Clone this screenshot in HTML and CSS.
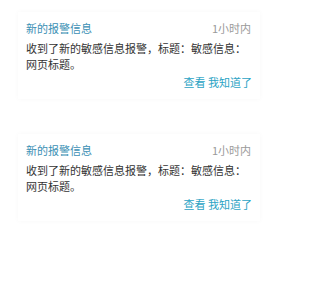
FILE: index.html
```html
<!DOCTYPE html>
<html lang="zh-CN">
<head>
<meta charset="utf-8">
<link rel="stylesheet" href="styles.css">
</head>
<body>
<div class="list">
  <div class="card">
    <div class="head">
      <span class="title">新的报警信息</span>
      <span class="time">1小时内</span>
    </div>
    <div class="text">收到了新的敏感信息报警，标题：敏感信息：网页标题。</div>
    <div class="actions"><a class="link">查看</a> <a class="link">我知道了</a></div>
  </div>
  <div class="card">
    <div class="head">
      <span class="title">新的报警信息</span>
      <span class="time">1小时内</span>
    </div>
    <div class="text">收到了新的敏感信息报警，标题：敏感信息：网页标题。</div>
    <div class="actions"><a class="link">查看</a> <a class="link">我知道了</a></div>
  </div>
</div>
</body>
</html>
```

FILE: styles.css
```css
html, body {
  margin: 0;
  background: #ffffff;
}
body {
  font-family: "Noto Sans CJK SC", "Noto Sans", sans-serif;
  font-size: 11px;
}
.list {
  padding: 12px 0 0 18px;
}
.card {
  width: 226px;
  padding: 8px;
  margin-bottom: 35px;
  background: #ffffff;
  box-shadow: 0 0 5px rgba(0, 0, 0, 0.03);
}
.head {
  display: flex;
  justify-content: space-between;
  line-height: 17px;
  margin-bottom: 3px;
}
.title {
  color: #3b8fb4;
}
.time {
  color: #9a9a9a;
  padding-right: 1px;
}
.text {
  color: #333333;
  line-height: 16px;
}
.actions {
  margin-top: 2px;
  line-height: 17px;
  text-align: right;
}
.link {
  color: #2ba3c4;
}
```
